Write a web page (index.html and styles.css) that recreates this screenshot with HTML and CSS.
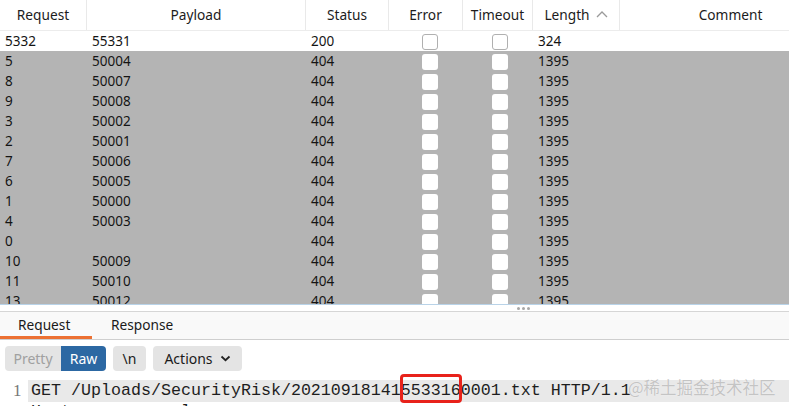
FILE: index.html
```html
<!DOCTYPE html>
<html>
<head>
<meta charset="utf-8">
<link rel="stylesheet" href="styles.css">
</head>
<body>
<div class="results">
  <div class="grid head">
    <div class="hc">Request</div>
    <div class="hc">Payload</div>
    <div class="hc">Status</div>
    <div class="hc">Error</div>
    <div class="hc">Timeout</div>
    <div class="hc">Length <svg class="sort" width="12" height="8" viewBox="0 0 12 8"><path d="M1 7 L6 2 L11 7" fill="none" stroke="#9a9a9a" stroke-width="1.3"/></svg></div>
    <div class="hc">Comment</div>
  </div>
  <div class="grid row first">
    <div>5332</div><div>55331</div><div>200</div><div class="cb"><span class="box"></span></div><div class="cb"><span class="box"></span></div><div>324</div><div></div>
  </div>
  <div class="grid row sel"><div>5</div><div>50004</div><div>404</div><div class="cb"><span class="box"></span></div><div class="cb"><span class="box"></span></div><div>1395</div><div></div></div>
  <div class="grid row sel"><div>8</div><div>50007</div><div>404</div><div class="cb"><span class="box"></span></div><div class="cb"><span class="box"></span></div><div>1395</div><div></div></div>
  <div class="grid row sel"><div>9</div><div>50008</div><div>404</div><div class="cb"><span class="box"></span></div><div class="cb"><span class="box"></span></div><div>1395</div><div></div></div>
  <div class="grid row sel"><div>3</div><div>50002</div><div>404</div><div class="cb"><span class="box"></span></div><div class="cb"><span class="box"></span></div><div>1395</div><div></div></div>
  <div class="grid row sel"><div>2</div><div>50001</div><div>404</div><div class="cb"><span class="box"></span></div><div class="cb"><span class="box"></span></div><div>1395</div><div></div></div>
  <div class="grid row sel"><div>7</div><div>50006</div><div>404</div><div class="cb"><span class="box"></span></div><div class="cb"><span class="box"></span></div><div>1395</div><div></div></div>
  <div class="grid row sel"><div>6</div><div>50005</div><div>404</div><div class="cb"><span class="box"></span></div><div class="cb"><span class="box"></span></div><div>1395</div><div></div></div>
  <div class="grid row sel"><div>1</div><div>50000</div><div>404</div><div class="cb"><span class="box"></span></div><div class="cb"><span class="box"></span></div><div>1395</div><div></div></div>
  <div class="grid row sel"><div>4</div><div>50003</div><div>404</div><div class="cb"><span class="box"></span></div><div class="cb"><span class="box"></span></div><div>1395</div><div></div></div>
  <div class="grid row sel"><div>0</div><div></div><div>404</div><div class="cb"><span class="box"></span></div><div class="cb"><span class="box"></span></div><div>1395</div><div></div></div>
  <div class="grid row sel"><div>10</div><div>50009</div><div>404</div><div class="cb"><span class="box"></span></div><div class="cb"><span class="box"></span></div><div>1395</div><div></div></div>
  <div class="grid row sel"><div>11</div><div>50010</div><div>404</div><div class="cb"><span class="box"></span></div><div class="cb"><span class="box"></span></div><div>1395</div><div></div></div>
  <div class="grid row sel"><div>13</div><div>50012</div><div>404</div><div class="cb"><span class="box"></span></div><div class="cb"><span class="box"></span></div><div>1395</div><div></div></div>
</div>
<div class="splitter"><span class="dots"><i></i><i></i><i></i></span></div>
<div class="tabs">
  <div class="tab active">Request</div>
  <div class="tab">Response</div>
</div>
<div class="toolbar">
  <div class="seg"><span class="btn off">Pretty</span><span class="btn on">Raw</span></div>
  <span class="btn">\n</span>
  <span class="btn">Actions <svg width="11" height="7" viewBox="0 0 11 7"><path d="M1.5 1.5 L5.5 5.2 L9.5 1.5" fill="none" stroke="#222" stroke-width="1.8"/></svg></span>
</div>
<div class="code">
  <div class="line hl"><span class="ln">1</span><span class="src">GET /Uploads/SecurityRisk/20210918141<span class="mark">553316</span>0001.txt HTTP/1.1</span></div>
  <div class="line"><span class="ln">2</span><span class="src">Host: www.example.com</span></div>
  <div class="watermark">@稀土掘金技术社区</div>
</div>
</body>
</html>
```
FILE: styles.css
```css
* { box-sizing: border-box; }
html, body { margin: 0; padding: 0; background: #fff; }
body {
  width: 789px;
  height: 406px;
  overflow: hidden;
  font-family: "Noto Sans", "Open Sans", sans-serif;
  font-size: 13.5px;
  color: #141414;
}
.results {
  height: 304px;
  overflow: hidden;
  width: 789px;
}
.grid {
  display: grid;
  grid-template-columns: 87px 219px 83px 74px 70px 87px 222px;
  width: 842px;
}
.head {
  height: 31px;
  border-bottom: 1px solid #ececec;
  background: #fff;
}
.hc {
  display: flex;
  align-items: center;
  justify-content: center;
  gap: 6px;
  border-right: 1px solid #e9e9e9;
  color: #1c1c1c;
  font-size: 13.7px;
  padding-bottom: 1px;
}
.hc .sort { margin-top: -2px; }
.row {
  height: 20px;
  line-height: 21px;
}
.row > div { padding-left: 5px; white-space: nowrap; }
.first { background: #fff; }
.sel { background: #b4b4b4; }
.cb { display: flex; align-items: center; padding-left: 0 !important; }
.row > div:nth-child(4) { padding-left: 33px !important; }
.row > div:nth-child(5) { padding-left: 29px !important; }
.box {
  width: 16px;
  height: 16px;
  border-radius: 3px;
  background: #fff;
}
.first .box { border: 1px solid #b0b0b0; }
.sel .box { border: none; }
.splitter {
  height: 8px;
  border-top: 1px solid #b9d3e8;
  border-bottom: 1px solid #d6d6d6;
  display: flex;
  justify-content: center;
  padding-left: 258px;
  background: #fff;
}
.dots { display: flex; gap: 2px; margin-top: 2px; }
.dots i { width: 3px; height: 3px; border-radius: 50%; background: #a7a7a7; display: block; }
.tabs {
  display: flex;
  height: 28px;
  background: #f9f9f9;
  border-bottom: 1px solid #cfcfcf;
}
.tab {
  padding: 0 18px;
  line-height: 25px;
  font-size: 13.7px;
  color: #1a1a1a;
}
.tab.active {
  width: 92px;
  border-bottom: 3px solid #ec7032;
}
.tab + .tab { padding-left: 19px; }
.toolbar {
  display: flex;
  gap: 7px;
  padding: 6px 0 0 5px;
  height: 40px;
}
.seg { display: flex; }
.btn {
  display: flex;
  align-items: center;
  gap: 7px;
  height: 25px;
  padding: 0 9px;
  background: #e4e4e4;
  border-radius: 4px;
  font-size: 14px;
  color: #1a1a1a;
}
.seg .btn.off { border-radius: 4px 0 0 4px; color: #a0a0a0; width: 56px; justify-content: center; }
.seg .btn.on { border-radius: 0 4px 4px 0; background: #2c68a3; color: #fff; width: 45px; justify-content: center; }
.toolbar > .btn:nth-child(2) { width: 33px; justify-content: center; padding: 0; }
.toolbar > .btn:nth-child(3) { width: 89px; justify-content: center; padding: 0; }
.code {
  position: relative;
}
.line {
  display: flex;
  height: 22px;
  line-height: 22px;
  font-family: "Liberation Mono", "DejaVu Sans Mono", monospace;
  font-size: 16.67px;
  color: #1e1e1e;
}
.line + .line { margin-top: -1px; }
.ln {
  width: 28px;
  padding-left: 13px;
  color: #777;
  font-family: "Liberation Serif", serif;
  font-size: 17px;
}
.src { flex: 1; padding-left: 3px; white-space: pre; }
.line.hl .src { background: #e9e9e9; }
.mark { position: relative; }
.mark::after {
  content: "";
  position: absolute;
  left: -1px;
  right: -1px;
  top: -7px;
  bottom: -3px;
  border: 3px solid #e8221b;
  border-radius: 4px;
}
.watermark {
  position: absolute;
  left: 628px;
  top: -5px;
  font-family: "Noto Sans CJK SC", sans-serif;
  font-size: 16.5px;
  color: #c4c4c4;
  white-space: nowrap;
  text-shadow: 0 0 1px #fff;
}
```
